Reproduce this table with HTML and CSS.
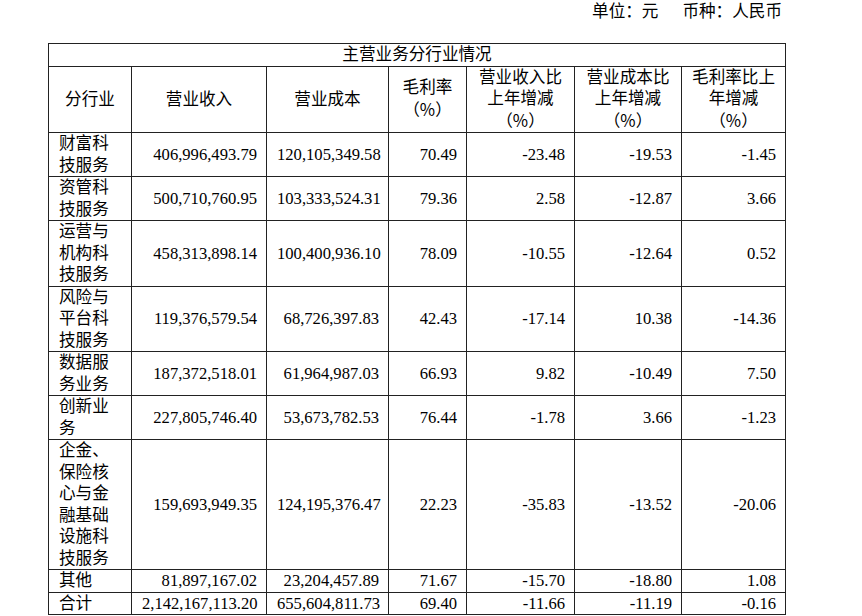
FILE: index.html
```html
<!DOCTYPE html>
<html lang="zh-CN">
<head>
<meta charset="utf-8">
<title>主营业务分行业情况</title>
<link rel="stylesheet" href="styles.css">
</head>
<body>
<div class="unit">单位：元<span class="cur">币种：人民币</span></div>
<table class="seg">
  <colgroup>
    <col class="c1"><col class="c2"><col class="c3"><col class="c4"><col class="c5"><col class="c6"><col class="c7">
  </colgroup>
  <thead>
    <tr><th colspan="7" class="title">主营业务分行业情况</th></tr>
    <tr>
      <th>分行业</th>
      <th>营业收入</th>
      <th>营业成本</th>
      <th>毛利率<br><span class="pct">（%）</span></th>
      <th>营业收入比<br>上年增减<br><span class="pct">（%）</span></th>
      <th>营业成本比<br>上年增减<br><span class="pct">（%）</span></th>
      <th>毛利率比上<br>年增减<br><span class="pct">（%）</span></th>
    </tr>
  </thead>
  <tbody>
    <tr><td class="name">财富科技服务</td><td>406,996,493.79</td><td>120,105,349.58</td><td>70.49</td><td>-23.48</td><td>-19.53</td><td>-1.45</td></tr>
    <tr><td class="name">资管科技服务</td><td>500,710,760.95</td><td>103,333,524.31</td><td>79.36</td><td>2.58</td><td>-12.87</td><td>3.66</td></tr>
    <tr><td class="name">运营与机构科技服务</td><td>458,313,898.14</td><td>100,400,936.10</td><td>78.09</td><td>-10.55</td><td>-12.64</td><td>0.52</td></tr>
    <tr><td class="name">风险与平台科技服务</td><td>119,376,579.54</td><td>68,726,397.83</td><td>42.43</td><td>-17.14</td><td>10.38</td><td>-14.36</td></tr>
    <tr><td class="name">数据服务业务</td><td>187,372,518.01</td><td>61,964,987.03</td><td>66.93</td><td>9.82</td><td>-10.49</td><td>7.50</td></tr>
    <tr><td class="name">创新业务</td><td>227,805,746.40</td><td>53,673,782.53</td><td>76.44</td><td>-1.78</td><td>3.66</td><td>-1.23</td></tr>
    <tr><td class="name">企金、保险核心与金融基础设施科技服务</td><td>159,693,949.35</td><td>124,195,376.47</td><td>22.23</td><td>-35.83</td><td>-13.52</td><td>-20.06</td></tr>
    <tr><td class="name">其他</td><td>81,897,167.02</td><td>23,204,457.89</td><td>71.67</td><td>-15.70</td><td>-18.80</td><td>1.08</td></tr>
    <tr><td class="name">合计</td><td>2,142,167,113.20</td><td>655,604,811.73</td><td>69.40</td><td>-11.66</td><td>-11.19</td><td>-0.16</td></tr>
  </tbody>
</table>
</body>
</html>
```
FILE: styles.css
```css
html, body {
  margin: 0;
  padding: 0;
  background: #fff;
}
body {
  font-family: "Liberation Serif", "Noto Sans CJK SC", serif;
  font-size: 16.6px;
  line-height: 21.5px;
  color: #000;
}
.unit {
  height: 43px;
  padding-top: 1px;
  padding-right: 80px;
  text-align: right;
  box-sizing: border-box;
}
.cur {
  margin-left: 24px;
}
.pct {
  font-family: "Noto Sans CJK SC", sans-serif;
}
.seg {
  margin-left: 48px;
  border-collapse: collapse;
  table-layout: fixed;
  width: 737px;
}
.c1 { width: 83px; }
.c2 { width: 135px; }
.c3 { width: 122px; }
.c4 { width: 78px; }
.c5 { width: 108px; }
.c6 { width: 107px; }
.c7 { width: 104px; }
.seg th, .seg td {
  border: 1px solid #222;
  padding: 0 9px 0 10px;
  vertical-align: middle;
}
.seg th {
  font-weight: normal;
  text-align: center;
  padding: 0;
}
.seg td {
  text-align: right;
  white-space: nowrap;
}
.seg td.name {
  text-align: left;
  white-space: normal;
  padding-right: 12px;
}
```
